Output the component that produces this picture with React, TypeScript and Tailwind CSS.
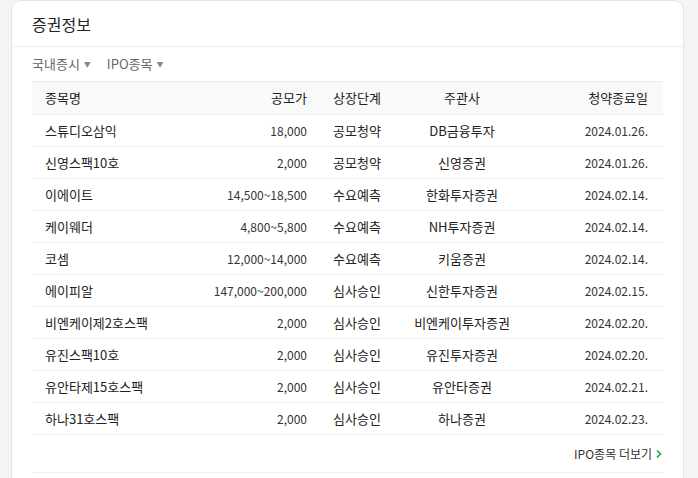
import React from "react";

const rows = [
  ["스튜디오삼익", "18,000", "공모청약", "DB금융투자", "2024.01.26."],
  ["신영스팩10호", "2,000", "공모청약", "신영증권", "2024.01.26."],
  ["이에이트", "14,500~18,500", "수요예측", "한화투자증권", "2024.02.14."],
  ["케이웨더", "4,800~5,800", "수요예측", "NH투자증권", "2024.02.14."],
  ["코셈", "12,000~14,000", "수요예측", "키움증권", "2024.02.14."],
  ["에이피알", "147,000~200,000", "심사승인", "신한투자증권", "2024.02.15."],
  ["비엔케이제2호스팩", "2,000", "심사승인", "비엔케이투자증권", "2024.02.20."],
  ["유진스팩10호", "2,000", "심사승인", "유진투자증권", "2024.02.20."],
  ["유안타제15호스팩", "2,000", "심사승인", "유안타증권", "2024.02.21."],
  ["하나31호스팩", "2,000", "심사승인", "하나증권", "2024.02.23."],
];

const grid = "grid grid-cols-[150px_135px_80px_130px_135px] items-center";

export default function App() {
  return (
    <div className="w-[698px] h-[478px] bg-[#f4f4f4] pl-[11px] pr-[14px] overflow-hidden" style={{ fontFamily: '"Noto Sans CJK KR", "Noto Sans", sans-serif' }}>
      <div className="bg-white border border-[#e4e4e4] rounded-t-[10px] h-[500px]">
        <div className="h-[46px] border-b border-[#eeeeee] flex items-center pl-[20px] text-[16px] text-[#222]">증권정보</div>
        <div className="px-[20px]">
          <div className="h-[34px] flex items-center gap-[16px] text-[13px] text-[#666]">
            <span className="flex items-center gap-[4px]">국내증시<span className="text-[7px] text-[#888]">▼</span></span>
            <span className="flex items-center gap-[4px]">IPO종목<span className="text-[7px] text-[#888]">▼</span></span>
          </div>
          <div className={`${grid} h-[34px] bg-[#f9f9f9] border-t border-b border-[#ececec] text-[13px] text-[#222]`}>
            <div className="pl-[13px]">종목명</div>
            <div className="text-right pr-[10px]">공모가</div>
            <div className="text-center">상장단계</div>
            <div className="text-center">주관사</div>
            <div className="text-right pr-[14px]">청약종료일</div>
          </div>
          {rows.map((r) => (
            <div key={r[0]} className={`${grid} h-[32px] border-b border-[#eeeeee] text-[13px] text-[#222]`}>
              <div className="pl-[13px]">{r[0]}</div>
              <div className="text-right pr-[10px] text-[12px] text-[#333]">{r[1]}</div>
              <div className="text-center">{r[2]}</div>
              <div className="text-center">{r[3]}</div>
              <div className="text-right pr-[14px] text-[12px] text-[#333]">{r[4]}</div>
            </div>
          ))}
          <div className="h-[38px] flex items-center justify-end pr-[0px] border-b border-[#eeeeee] text-[12px] text-[#333]">
            IPO종목 더보기
            <svg width="8" height="10" viewBox="0 0 8 10" className="ml-[3px]"><path d="M2 1.5 L5.5 5 L2 8.5" fill="none" stroke="#1fa43a" strokeWidth="1.6" /></svg>
          </div>
        </div>
      </div>
    </div>
  );
}
